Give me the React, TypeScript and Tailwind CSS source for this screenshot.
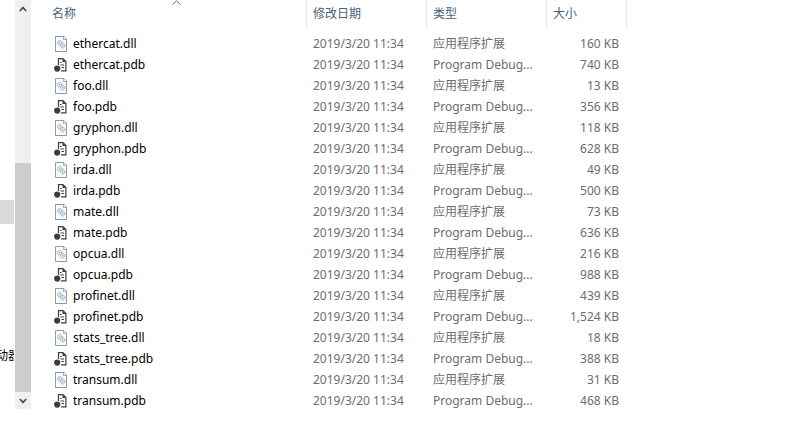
type FileRow = { name: string; size: string };

const MODIFIED = '2019/3/20 11:34';

const files: FileRow[] = [
  { name: 'ethercat.dll', size: '160 KB' },
  { name: 'ethercat.pdb', size: '740 KB' },
  { name: 'foo.dll', size: '13 KB' },
  { name: 'foo.pdb', size: '356 KB' },
  { name: 'gryphon.dll', size: '118 KB' },
  { name: 'gryphon.pdb', size: '628 KB' },
  { name: 'irda.dll', size: '49 KB' },
  { name: 'irda.pdb', size: '500 KB' },
  { name: 'mate.dll', size: '73 KB' },
  { name: 'mate.pdb', size: '636 KB' },
  { name: 'opcua.dll', size: '216 KB' },
  { name: 'opcua.pdb', size: '988 KB' },
  { name: 'profinet.dll', size: '439 KB' },
  { name: 'profinet.pdb', size: '1,524 KB' },
  { name: 'stats_tree.dll', size: '18 KB' },
  { name: 'stats_tree.pdb', size: '388 KB' },
  { name: 'transum.dll', size: '31 KB' },
  { name: 'transum.pdb', size: '468 KB' },
];

function DllIcon() {
  return (
    <svg className="size-4 shrink-0" viewBox="0 0 16 16" fill="none" aria-hidden="true">
      <path d="M2.5 .5h8.5l2.5 2.5v12.500h-11z" fill="#fafbfb" stroke="#94989b" />
      <path d="M10.500 .5v3h3" stroke="#a5a9ac" />
      <circle cx="6.800" cy="6.800" r="2.300" fill="#e6eef4" stroke="#93abbf" strokeDasharray="1.300 .4" />
      <circle cx="6.800" cy="6.800" r=".7" fill="#8ba3b7" />
      <circle cx="9.700" cy="9.700" r="2.300" fill="#e6eef4" stroke="#8badc6" strokeDasharray="1.300 .4" />
      <circle cx="9.700" cy="9.700" r=".7" fill="#8ba3b7" />
    </svg>
  );
}

function PdbIcon() {
  return (
    <svg className="size-4 shrink-0" viewBox="0 0 16 16" fill="none" aria-hidden="true">
      <path d="M5.500 8V1.600h4.500l2.900 2.900v9.400H8" stroke="#3c3c3e" strokeWidth="1.200" />
      <path d="M9.500 1.500v3.500h3.500z" fill="#3c3c3e" />
      <path d="M7 5.500h1.500M7.500 8h3.500M8.500 10.500h2.500" stroke="#3c3c3e" />
      <circle cx="4.200" cy="11.600" r="3.100" fill="#3c3c3e" />
    </svg>
  );
}

function Chevron({ down = false }: { down?: boolean }) {
  return (
    <svg className="h-2 w-2" viewBox="0 0 8 8" fill="none" aria-hidden="true">
      <path d={down ? 'M.8 2l3.2 3.4L7.2 2' : 'M.8 6L4 2.6 7.2 6'} stroke="#505050" strokeWidth="1.8" />
    </svg>
  );
}

function HeaderCell({ label, sorted = false, indent }: { label: string; sorted?: boolean; indent: string }) {
  return (
    <th
      scope="col"
      aria-sort={sorted ? 'ascending' : undefined}
      className="relative h-[27px] border-r border-[#e2e5e9] p-0 text-left font-normal text-[#4c607a]"
    >
      <button type="button" className={`block h-[27px] w-full text-left leading-[27px] ${indent}`}>
        {label}
      </button>
      {sorted && (
        <svg className="absolute top-0 left-[136px] h-[5px] w-[9px]" viewBox="0 0 9 5" fill="none" aria-hidden="true">
          <path d="M.7 4.5l3.8-3.8 3.8 3.8" stroke="#666" />
        </svg>
      )}
    </th>
  );
}

export default function App() {
  return (
    <div className="flex min-h-screen items-start bg-white font-['Noto_Sans','Noto_Sans_CJK_SC',sans-serif] text-xs">
      <div className="flex">
        <nav aria-label="导航" className="flex w-[15px] flex-col overflow-hidden pr-px pt-[200px]">
          <div className="h-6 shrink-0 bg-[#d9d9d9]" />
          <div className="mt-[120px] flex h-6 w-full shrink-0 items-center overflow-hidden">
            <span className="-ml-1 whitespace-nowrap text-black">动器</span>
          </div>
        </nav>

        <div className="mb-0.5 flex w-4 flex-col bg-[#f0f0f0]">
          <button type="button" aria-label="向上滚动" className="flex h-[18px] items-center justify-center">
            <Chevron />
          </button>
          <div className="h-[145px]" />
          <div className="flex-1 bg-[#cdcdcd]" />
          <button type="button" aria-label="向下滚动" className="flex h-[17px] items-center justify-center">
            <Chevron down />
          </button>
        </div>

        <main className="pl-[5px]">
          <table className="w-[591px] table-fixed border-separate border-spacing-0">
            <colgroup>
              <col className="w-[271px]" />
              <col className="w-[120px]" />
              <col className="w-[120px]" />
              <col className="w-[80px]" />
            </colgroup>
            <thead>
              <tr>
                <HeaderCell label="名称" sorted indent="pl-4" />
                <HeaderCell label="修改日期" indent="pl-1.5" />
                <HeaderCell label="类型" indent="pl-1.5" />
                <HeaderCell label="大小" indent="pl-1.5" />
              </tr>
            </thead>
            <tbody className="text-[#6d6d6d] before:block before:h-1.5">
              {files.map((file) => {
                const isDll = file.name.endsWith('.dll');
                return (
                  <tr key={file.name} className="h-[21px] leading-[21px]">
                    <td className="p-0 pl-[17px]">
                      <div className="flex items-center gap-1 text-black">
                        {isDll ? <DllIcon /> : <PdbIcon />}
                        <span>{file.name}</span>
                      </div>
                    </td>
                    <td className="p-0 pl-1.5">{MODIFIED}</td>
                    <td className="whitespace-nowrap p-0 pl-1.5">{isDll ? '应用程序扩展' : 'Program Debug...'}</td>
                    <td className="p-0 pr-2 text-right">{file.size}</td>
                  </tr>
                );
              })}
            </tbody>
          </table>
        </main>
      </div>
    </div>
  );
}
